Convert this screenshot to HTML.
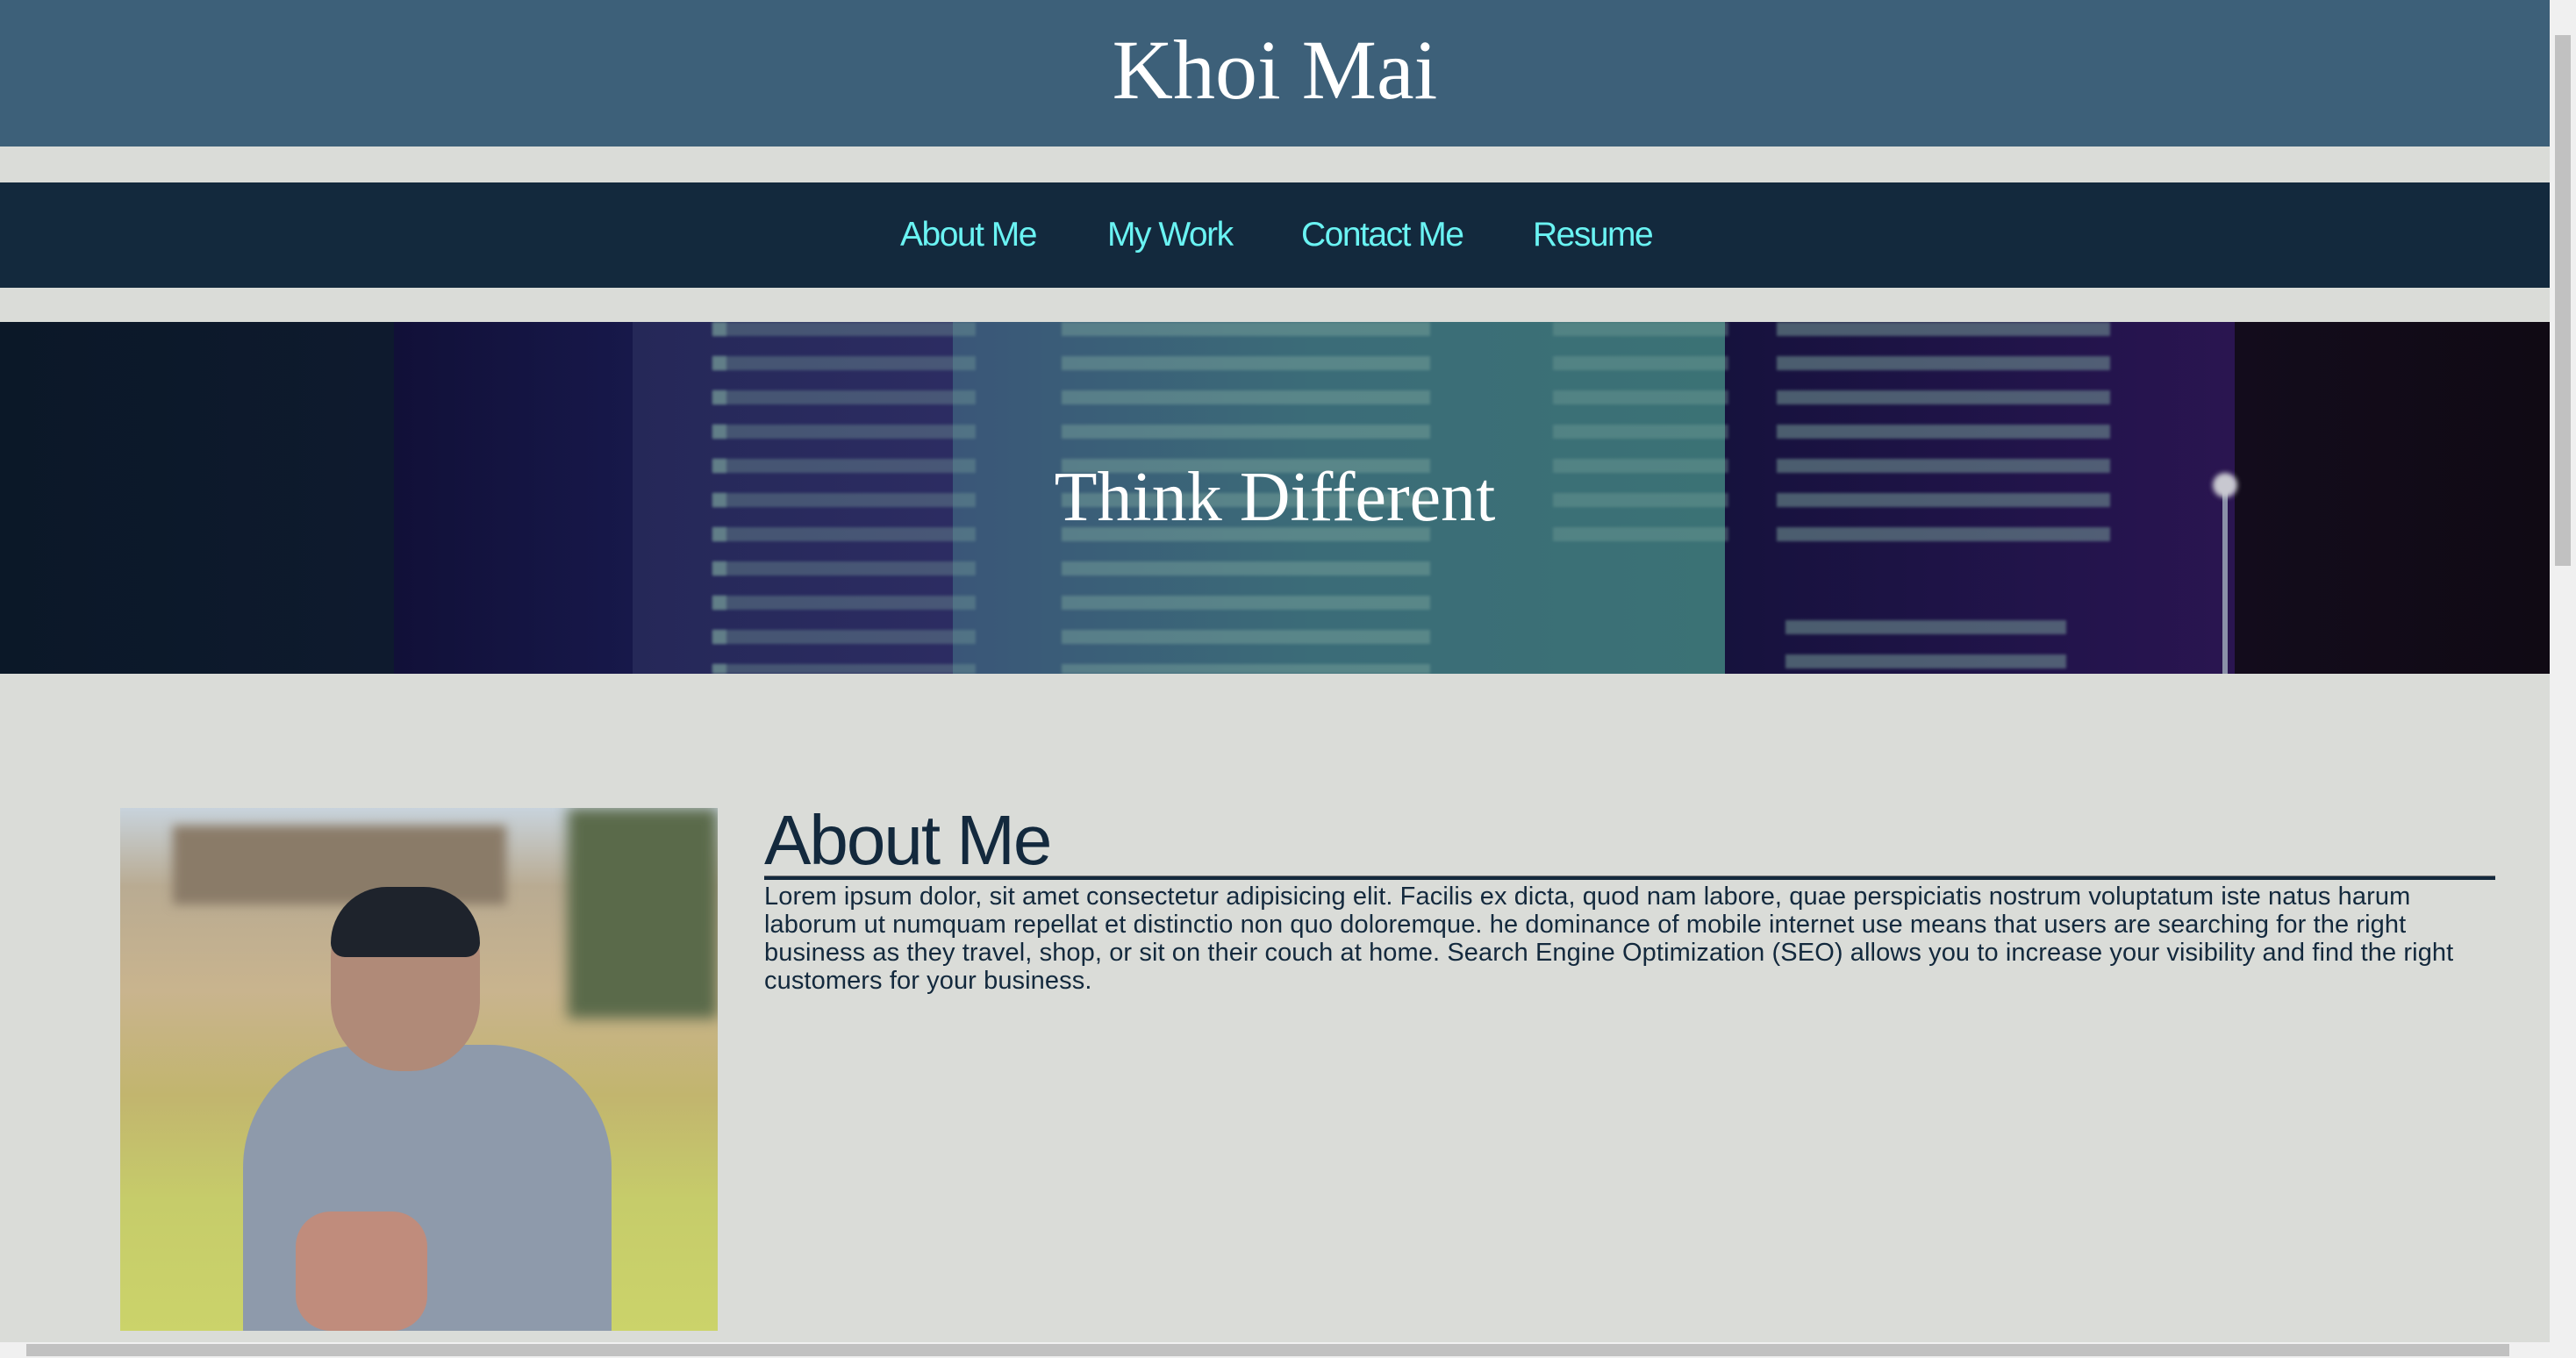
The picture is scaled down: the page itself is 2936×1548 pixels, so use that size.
<!DOCTYPE html>
<html><head><meta charset="utf-8"><style>
*{margin:0;padding:0;box-sizing:border-box}
html,body{width:2936px;height:1548px;overflow:hidden;background:#dadcd8}
.page{position:absolute;left:0;top:0;width:2906px;height:1530px;background:#dadcd8}
header{position:absolute;left:0;top:0;width:2906px;height:167px;background:#3d6079;text-align:center}
header h1{font-family:"Liberation Serif",serif;font-weight:normal;color:#fff;font-size:96px;line-height:160px}
nav{position:absolute;left:0;top:208px;width:2906px;height:120px;background:#13293d}
nav a{position:absolute;top:0;line-height:120px;font-family:"Liberation Sans",sans-serif;font-size:39px;color:#6af3f3;text-decoration:none;letter-spacing:-1.5px}
.hero{position:absolute;left:0;top:367px;width:2906px;height:401px;overflow:hidden;
background:linear-gradient(90deg,#0b1828 0,#0e1a2e 449px,#111038 449px,#17184a 721px,#252858 721px,#2c2c62 1086px,#3a5678 1086px,#3b6c78 1500px,#3b7275 1966px,#16123d 1966px,#24144d 2400px,#2a1550 2547px,#130c1c 2547px,#100a14 2906px)}
.bars{position:absolute;filter:blur(1.5px);opacity:.55;
background:repeating-linear-gradient(180deg,#7ea79e 0 16px,transparent 16px 39px)}
.hero h2{position:absolute;left:0;width:2906px;top:150px;text-align:center;font-family:"Liberation Serif",serif;font-weight:normal;color:#fff;font-size:80px;line-height:100px}
.photo{position:absolute;left:137px;top:921px;width:681px;height:596px;overflow:hidden;
background:linear-gradient(180deg,#c8d3dc 0,#b9ab92 15%,#c9b48e 35%,#c2b56e 55%,#c6cc6a 75%,#cbd36a 100%)}
.about h3{position:absolute;left:871px;top:912px;font-family:"Liberation Sans",sans-serif;font-weight:normal;font-size:80px;color:#13293d;letter-spacing:-2px}
.rule{position:absolute;left:871px;top:998px;width:1973px;height:5px;background:#13293d;border-top:1px solid #777}
.about p{position:absolute;left:871px;top:1006px;width:2000px;white-space:nowrap;font-family:"Liberation Sans",sans-serif;font-size:29px;line-height:32px;color:#13293d;letter-spacing:0.1px}
.vs{position:absolute;left:2906px;top:0;width:30px;height:1530px;background:#f0f0f0}
.vs i{position:absolute;left:6px;top:40px;width:18px;height:605px;background:#c1c1c1}
.hs{position:absolute;left:0;top:1530px;width:2936px;height:18px;background:#f0f0f0}
.hs i{position:absolute;left:30px;top:2px;width:2830px;height:14px;background:#c1c1c1}
</style></head><body>
<div class="page">
<header><h1>Khoi Mai</h1></header>
<nav><a style="left:1026px">About Me</a><a style="left:1262px">My Work</a><a style="left:1483px">Contact Me</a><a style="left:1747px">Resume</a></nav>
<div class="hero">
<div class="bars" style="left:812px;top:0;width:300px;height:401px;opacity:.35"></div>
<div class="bars" style="left:812px;top:0;width:16px;height:401px;opacity:.5"></div>
<div class="bars" style="left:1210px;top:0;width:420px;height:401px;opacity:.45"></div>
<div class="bars" style="left:1770px;top:0;width:200px;height:250px;opacity:.35"></div>
<div class="bars" style="left:2025px;top:0;width:380px;height:250px;opacity:.5"></div>
<div class="bars" style="left:2035px;top:340px;width:320px;height:60px;opacity:.5"></div>
<div style="position:absolute;left:2533px;top:180px;width:6px;height:221px;background:#8a90a8"></div>
<div style="position:absolute;left:2522px;top:172px;width:28px;height:28px;border-radius:50%;background:#c8c8d0;filter:blur(3px)"></div>
<h2>Think Different</h2>
</div>
<div class="photo">
<div style="position:absolute;left:60px;top:20px;width:380px;height:90px;background:#8a7b68;filter:blur(6px)"></div>
<div style="position:absolute;left:510px;top:0;width:171px;height:240px;background:#5a6a4a;filter:blur(8px)"></div>
<div style="position:absolute;left:140px;top:270px;width:420px;height:326px;border-radius:140px 140px 0 0;background:#8e9aab"></div>
<div style="position:absolute;left:240px;top:90px;width:170px;height:210px;border-radius:80px;background:#b08a78"></div>
<div style="position:absolute;left:240px;top:90px;width:170px;height:80px;border-radius:80px 80px 20px 20px;background:#1e232c"></div>
<div style="position:absolute;left:200px;top:460px;width:150px;height:136px;border-radius:40px;background:#c08c7c"></div>
</div>
<div class="about">
<h3>About Me</h3>
<div class="rule"></div>
<p>Lorem ipsum dolor, sit amet consectetur adipisicing elit. Facilis ex dicta, quod nam labore, quae perspiciatis nostrum voluptatum iste natus harum<br>laborum ut numquam repellat et distinctio non quo doloremque. he dominance of mobile internet use means that users are searching for the right<br>business as they travel, shop, or sit on their couch at home. Search Engine Optimization (SEO) allows you to increase your visibility and find the right<br>customers for your business.</p>
</div>
</div>
<div class="vs"><i></i></div>
<div class="hs"><i></i></div>
</body></html>
